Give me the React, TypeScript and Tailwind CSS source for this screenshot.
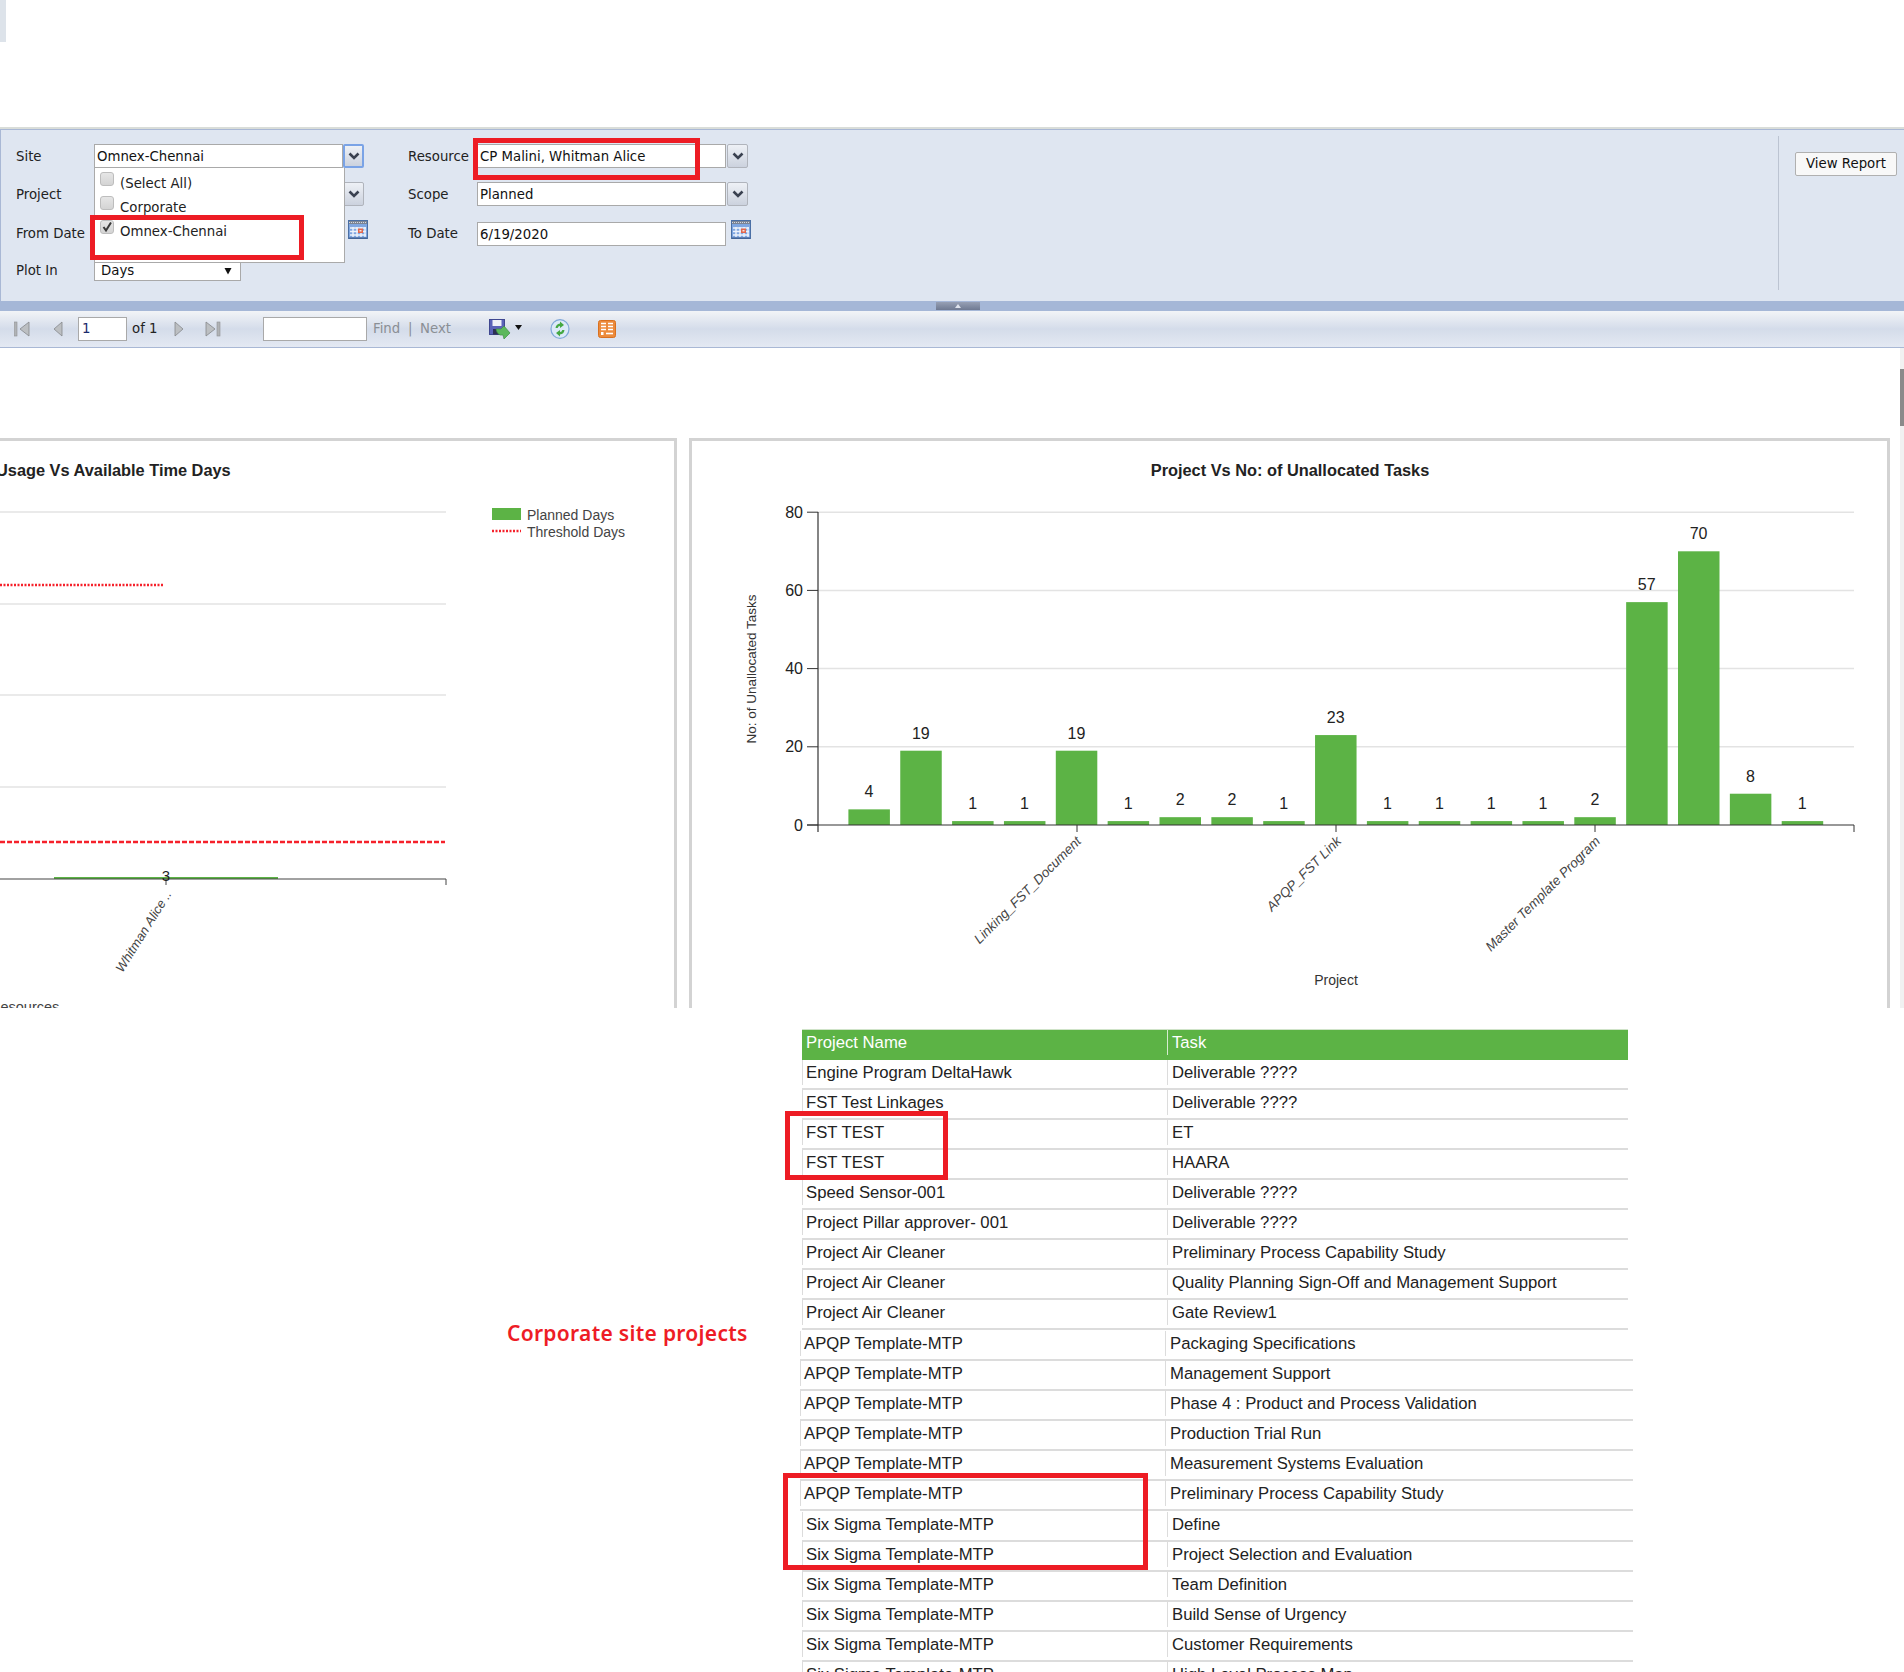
const bars = [4, 19, 1, 1, 19, 1, 2, 2, 1, 23, 1, 1, 1, 1, 2, 57, 70, 8, 1];

const tableTop = [
  ["Engine Program DeltaHawk", "Deliverable ????"],
  ["FST Test Linkages", "Deliverable ????"],
  ["FST TEST", "ET"],
  ["FST TEST", "HAARA"],
  ["Speed Sensor-001", "Deliverable ????"],
  ["Project Pillar approver- 001", "Deliverable ????"],
  ["Project Air Cleaner", "Preliminary Process Capability Study"],
  ["Project Air Cleaner", "Quality Planning Sign-Off and Management Support"],
  ["Project Air Cleaner", "Gate Review1"],
];

const tableMiddle = [
  ["APQP Template-MTP", "Packaging Specifications"],
  ["APQP Template-MTP", "Management Support"],
  ["APQP Template-MTP", "Phase 4 : Product and Process Validation"],
  ["APQP Template-MTP", "Production Trial Run"],
  ["APQP Template-MTP", "Measurement Systems Evaluation"],
  ["APQP Template-MTP", "Preliminary Process Capability Study"],
];

const tableBottom = [
  ["Six Sigma Template-MTP", "Define"],
  ["Six Sigma Template-MTP", "Project Selection and Evaluation"],
  ["Six Sigma Template-MTP", "Team Definition"],
  ["Six Sigma Template-MTP", "Build Sense of Urgency"],
  ["Six Sigma Template-MTP", "Customer Requirements"],
  ["Six Sigma Template-MTP", "High Level Process Map"],
];

function DropButton({ focused }: { focused?: boolean }) {
  return (
    <div className={`flex h-[24px] w-[21px] items-center justify-center rounded-[2px] bg-gradient-to-b from-[#eef1f6] to-[#ccd2de] ${focused ? "border-2 border-[#7aa3e6]" : "border border-[#b0b4bc]"}`}>
      <svg width="12" height="9" viewBox="0 0 12 9">
        <path d="M1.5 1.5 L6 6 L10.5 1.5" fill="none" stroke="#3a4150" strokeWidth="2.6" />
      </svg>
    </div>
  );
}

function CalendarIcon() {
  return (
    <svg width="20" height="19" viewBox="0 0 20 19" className="-mt-[5px]">
      <rect x="0.5" y="0.5" width="19" height="18" fill="#7fa6e0" stroke="#4a6fa5" />
      <rect x="1" y="1" width="18" height="3" fill="#7b8494" />
      <path d="M1 2.5h18" stroke="#d5d8de" strokeDasharray="1 1" />
      <path d="M2 8h16M2 11.5h16M2 15h16" stroke="#eef3fb" strokeWidth="1.6" />
      <path d="M5 7v10M9 7v10M13 7v10M17 7v10" stroke="#eef3fb" strokeWidth="1.4" />
      <rect x="10" y="8.5" width="5" height="4.5" fill="#e2664c" />
      <rect x="11.5" y="10" width="2" height="1.5" fill="#f6e4dc" />
      <path d="M1 18h18" stroke="#3c5a8a" />
    </svg>
  );
}

function TextBox({ value, className }: { value?: string; className?: string }) {
  return (
    <div className={`flex items-center border border-[#a9a9a9] bg-white pl-[2px] pt-[2px] text-[13.3px] leading-none text-[#111] ${className ?? ""}`}>
      {value}
    </div>
  );
}

function Row({ className, children }: { className?: string; children: React.ReactNode }) {
  return <div className={`flex h-[24px] items-center ${className ?? ""}`}>{children}</div>;
}

function Label({ text, className }: { text: string; className: string }) {
  return <div className={`shrink-0 text-[13.3px] text-[#222] ${className}`}>{text}</div>;
}

function CheckItem({ label, checked, className }: { label: string; checked?: boolean; className: string }) {
  return (
    <div className={`flex items-start pl-[5px] ${className}`}>
      <div className="relative h-[14px] w-[14px] rounded-[3px] border border-[#bdbdbd] bg-gradient-to-b from-[#e6e6e6] to-[#d4d4d4]">
        {checked && (
          <svg width="12" height="12" viewBox="0 0 12 12" className="absolute left-0 top-0">
            <path d="M2.5 6 L5 9.5 L10 1.5" fill="none" stroke="#3a3a3a" strokeWidth="2" />
          </svg>
        )}
      </div>
      <span className="ml-[6px] mt-[2px] text-[13.3px] text-[#222]">{label}</span>
    </div>
  );
}

function ToolbarArrow({ d, bar }: { d: string; bar?: number }) {
  return (
    <svg width="16" height="16" viewBox="0 0 16 16">
      {bar !== undefined && <rect x={bar} y="1" width="3" height="14" fill="#b0b3b6" stroke="#8f9295" strokeWidth="0.6" />}
      <path d={d} fill="#bcbfc2" stroke="#85888b" strokeWidth="0.8" />
    </svg>
  );
}

function SaveIcon() {
  return (
    <svg width="22" height="21" viewBox="0 0 22 21">
      <rect x="0.5" y="0.5" width="15" height="15" fill="#5a62b8" stroke="#3f4790" />
      <rect x="3.5" y="1" width="9" height="6" fill="#eef0f8" />
      <rect x="4" y="10" width="8" height="5.5" fill="#2c3153" />
      <path d="M7 10 L12 10 L15 7 L21 14 L15 20 L14 16 L11 16 Q8 15 7 10 Z" fill="#5cb85c" stroke="#3f8f45" strokeWidth="0.7" />
    </svg>
  );
}

function RefreshIcon() {
  return (
    <svg width="20" height="20" viewBox="0 0 20 20">
      <ellipse cx="10" cy="10" rx="9" ry="9.3" fill="#dbe9f8" stroke="#7fa8d8" strokeWidth="1.2" />
      <path d="M5.5 9 Q6 5 10 4.5 L10 2.5 L14 6 L10 9 L10 7 Q8 7 7.7 9 Z" fill="#45a843" />
      <path d="M14.5 11 Q14 15 10 15.5 L10 17.5 L6 14 L10 11 L10 13 Q12 13 12.3 11 Z" fill="#45a843" />
    </svg>
  );
}

function OrangeIcon() {
  return (
    <svg width="18" height="18" viewBox="0 0 18 18">
      <rect x="0.5" y="0.5" width="17" height="17" rx="2" fill="#ec8a3b" stroke="#d9701f" />
      <path d="M3 3.5h5M10 3.5h5M3 6.5h5M10 6.5h5M10 9.5h5M3 9.5h5" stroke="#fff" strokeWidth="1.6" />
      <rect x="3" y="12" width="2.5" height="3" fill="#fff" />
      <path d="M8 13.5h7" stroke="#fff" strokeWidth="1.6" />
    </svg>
  );
}

function UsageChart() {
  return (
    <svg width="674" height="567" viewBox="0 441 674 567" className="block">
      <text x="-4" y="476" fontSize="16.35" fontWeight="700" fill="#222">Usage Vs Available Time Days</text>
      {[512, 604, 695, 787].map((y) => (
        <line key={y} x1="0" x2="446" y1={y} y2={y} stroke="#e3e3e3" strokeWidth="1.5" />
      ))}
      <line x1="0" x2="164" y1="585" y2="585" stroke="#f5212b" strokeWidth="2.5" strokeDasharray="2 1.5" />
      <line x1="0" x2="445" y1="842" y2="842" stroke="#f5212b" strokeWidth="2.5" strokeDasharray="5 2" />
      <rect x="54" y="877" width="224" height="2" fill="#5cb345" />
      <line x1="0" x2="446" y1="879" y2="879" stroke="#444" strokeWidth="1.2" />
      <line x1="446" x2="446" y1="879" y2="885" stroke="#444" />
      <line x1="166" x2="166" y1="879" y2="885" stroke="#444" />
      <text x="166" y="881" fontSize="15" textAnchor="middle" fill="#222">3</text>
      <text transform="translate(172 894) rotate(-58)" fontSize="13" fontStyle="italic" textAnchor="end" fill="#444">Whitman Alice ..</text>
      <rect x="492" y="508" width="29" height="12" fill="#5cb345" />
      <text x="527" y="520" fontSize="14" fill="#444">Planned Days</text>
      <line x1="492" x2="521" y1="531" y2="531" stroke="#f5212b" strokeWidth="2.5" strokeDasharray="2 1.5" />
      <text x="527" y="537" fontSize="14" fill="#444">Threshold Days</text>
      <text x="-10" y="1012" fontSize="14.5" fill="#444">Resources</text>
    </svg>
  );
}

function TasksChart() {
  const zero = 825;
  const unit = 3.91;
  return (
    <svg width="1195" height="567" viewBox="692 441 1195 567" className="block">
      <text x="1290" y="476" fontSize="16.35" fontWeight="700" textAnchor="middle" fill="#222">Project Vs No: of Unallocated Tasks</text>
      {[20, 40, 60, 80].map((v) => (
        <line key={v} x1="818" x2="1854" y1={zero - v * unit} y2={zero - v * unit} stroke="#e3e3e3" strokeWidth="1.5" />
      ))}
      {bars.map((v, i) => (
        <rect key={i} x={848.4 + i * 51.85} y={zero - v * unit} width="41.5" height={v * unit} fill="#5cb345" />
      ))}
      {bars.map((v, i) => (
        <text key={i} x={869 + i * 51.85} y={zero - v * unit - 12} fontSize="16" textAnchor="middle" fill="#222">{v}</text>
      ))}
      <line x1="818" x2="818" y1="512" y2="832" stroke="#333" strokeWidth="1.2" />
      <line x1="807" x2="1854" y1={zero} y2={zero} stroke="#333" strokeWidth="1.2" />
      {[0, 20, 40, 60, 80].map((v) => (
        <g key={v}>
          <line x1="807" x2="818" y1={zero - v * unit} y2={zero - v * unit} stroke="#333" />
          <text x="803" y={zero - v * unit + 5.5} fontSize="16" textAnchor="end" fill="#222">{v}</text>
        </g>
      ))}
      {[1077, 1336, 1595, 1854].map((x) => (
        <line key={x} x1={x} x2={x} y1={zero} y2={zero + 7} stroke="#333" />
      ))}
      <text transform="translate(1082 842) rotate(-45)" fontSize="13.5" fontStyle="italic" textAnchor="end" fill="#444">Linking_FST_Document</text>
      <text transform="translate(1342 842) rotate(-45)" fontSize="13.5" fontStyle="italic" textAnchor="end" fill="#444">APQP_FST Link</text>
      <text transform="translate(1601 842) rotate(-45)" fontSize="13.5" fontStyle="italic" textAnchor="end" fill="#444">Master Template Program</text>
      <text x="1336" y="985" fontSize="14" textAnchor="middle" fill="#333">Project</text>
      <text transform="translate(756 669) rotate(-90)" fontSize="13.5" textAnchor="middle" fill="#333">No: of Unallocated Tasks</text>
    </svg>
  );
}

function TableRows({ rows, offset }: { rows: string[][]; offset: string }) {
  return (
    <>
      {rows.map(([project, task], i) => (
        <div key={i} className={`flex h-[30px] border-b-2 border-[#dcdcdc] pb-[3px] ${offset}`}>
          <div className="flex w-[365px] shrink-0 items-center border-l border-[#dcdcdc] pl-[3px]">{project}</div>
          <div className="flex flex-1 items-center border-l border-[#dcdcdc] pl-[4px]">{task}</div>
        </div>
      ))}
    </>
  );
}

export default function App() {
  return (
    <div className="relative h-[1672px] w-[1904px] overflow-hidden bg-white [font-family:Liberation_Sans,sans-serif]">
      <div className="h-[127px]">
        <div className="h-[42px] w-[6px] bg-[#dde3ea]" />
      </div>

      {/* report parameters */}
      <div className="border-t-2 border-[#d9ddd9]">
        <div className="flex h-[172px] border-t border-l border-[#a9b8d5] bg-[#dfe6f1] [font-family:DejaVu_Sans,sans-serif]">
          <div className="w-[1777px] pl-[15px] pt-[14px]">
            <Row>
              <Label text="Site" className="mt-[2px] w-[78px]" />
              <TextBox value="Omnex-Chennai" className="h-[24px] w-[249px]" />
              <DropButton focused />
              <Label text="Resource" className="ml-[44px] mt-[2px] w-[69px]" />
              <TextBox value="CP Malini, Whitman Alice" className="h-[24px] w-[249px]" />
              <div className="ml-[1px]"><DropButton /></div>
            </Row>
            <Row className="mt-[14px]">
              <Label text="Project" className="mt-[2px] w-[78px]" />
              <TextBox className="h-[24px] w-[249px]" />
              <DropButton />
              <Label text="Scope" className="ml-[44px] mt-[2px] w-[69px]" />
              <TextBox value="Planned" className="h-[24px] w-[249px]" />
              <div className="ml-[1px]"><DropButton /></div>
            </Row>
            <Row className="mt-[16px]">
              <Label text="From Date" className="w-[78px]" />
              <TextBox className="h-[24px] w-[249px]" />
              <div className="ml-[5px] flex h-[24px] w-[20px] items-start pt-[3px]"><CalendarIcon /></div>
              <Label text="To Date" className="ml-[40px] w-[69px]" />
              <TextBox value="6/19/2020" className="h-[24px] w-[249px]" />
              <div className="ml-[5px] flex h-[24px] w-[20px] items-start pt-[3px]"><CalendarIcon /></div>
            </Row>
            <Row className="mt-[13px]">
              <Label text="Plot In" className="w-[78px]" />
              <div className="flex h-[19px] w-[147px] items-center justify-between border border-[#a9a9a9] bg-white pl-[6px] pr-[8px] text-[13.3px] text-[#111]">
                <span>Days</span>
                <svg width="8" height="8" viewBox="0 0 8 8"><path d="M0.5 1h7L4 7.5z" fill="#111" /></svg>
              </div>
            </Row>
          </div>
          <div className="mb-[11px] mt-[6px] w-px bg-[#bcc4d2]" />
          <div className="pl-[16px] pt-[21px]">
            <button className="h-[24px] w-[102px] rounded-[2px] border border-[#b0b0b0] bg-[#f8f8f8] text-[13.3px] text-[#111] [font-family:DejaVu_Sans,sans-serif]">View Report</button>
          </div>
        </div>
      </div>

      <div className="flex h-[10px] justify-center bg-[#a5b7d7] pt-[1px]">
        <div className="ml-[12px] flex h-[8px] w-[44px] items-center justify-center bg-gradient-to-b from-[#97a0b4] to-[#6f7a92]">
          <svg width="6" height="4" viewBox="0 0 6 4"><path d="M3 0 L6 4 L0 4Z" fill="#dfe4ee" /></svg>
        </div>
      </div>

      {/* report toolbar */}
      <div className="flex h-[37px] items-center border-b border-[#a9b8d5] bg-gradient-to-b from-[#f2f4f7] via-[#d4dcea] to-[#e4e9f3] pl-[14px] text-[13.3px] [font-family:DejaVu_Sans,sans-serif]">
        <ToolbarArrow bar={0} d="M15 1 L15 15 L6 8 Z" />
        <div className="ml-[21px]"><ToolbarArrow d="M11 1 L11 15 L3 8 Z" /></div>
        <div className="ml-[11px] flex h-[24px] w-[49px] items-center border border-[#a9a9a9] bg-white pl-[3px] text-[#1a2a6c]">1</div>
        <span className="ml-[5px] w-[29px] text-[#222]">of 1</span>
        <div className="ml-[9px]"><ToolbarArrow d="M5 1 L5 15 L13 8 Z" /></div>
        <div className="ml-[19px]"><ToolbarArrow bar={12} d="M1 1 L1 15 L10 8 Z" /></div>
        <div className="ml-[42px] h-[24px] w-[104px] border border-[#a9a9a9] bg-white" />
        <span className="ml-[6px] w-[35px] text-[#8a8f95]">Find</span>
        <span className="w-[6px] text-[#8a8f95]">|</span>
        <span className="ml-[6px] w-[33px] text-[#8a8f95]">Next</span>
        <div className="ml-[36px]"><SaveIcon /></div>
        <svg width="7" height="5" viewBox="0 0 7 5" className="ml-[4px] -mt-[4px]"><path d="M0 0h7L3.5 5z" fill="#111" /></svg>
        <div className="ml-[28px]"><RefreshIcon /></div>
        <div className="ml-[28px]"><OrangeIcon /></div>
      </div>

      {/* charts */}
      <div className="relative h-[660px] overflow-hidden">
        <div className="absolute right-0 top-0 h-full w-[4px] bg-[#f1f1f1]">
          <div className="mt-[21px] h-[57px] bg-[#8a8a8a]" />
        </div>
        <div className="flex gap-[12px] pt-[90px]">
          <div className="h-[570px] w-[677px] shrink-0 overflow-hidden border-r-[3px] border-t-[3px] border-[#d3d3d3]">
            <UsageChart />
          </div>
          <div className="h-[570px] w-[1201px] shrink-0 overflow-hidden border-x-[3px] border-t-[3px] border-[#d3d3d3]">
            <TasksChart />
          </div>
        </div>
      </div>

      {/* task list */}
      <div className="flex text-[16.7px] text-[#222]">
        <div className="flex w-[800px] shrink-0 items-start pl-[507px] pt-[310px]">
          <span className="text-[21px] font-semibold tracking-[0.3px] text-[#ee1c25] [font-family:Noto_Sans,sans-serif]">Corporate site projects</span>
        </div>
        <div className="flex-1 pt-[21px]">
          <div className="ml-[2px] flex h-[31px] w-[826px] border-t border-[#cfe3c8] bg-[#5cb345] pb-[5px] text-white">
            <div className="flex w-[365px] shrink-0 items-center pl-[4px]">Project Name</div>
            <div className="flex flex-1 items-center border-l border-[#d6ecd0] pl-[4px]">Task</div>
          </div>
          <div className="w-[828px]">
            <TableRows rows={tableTop} offset="ml-[2px] w-[826px]" />
          </div>
          <div className="w-[833px] pt-[1px]">
            <TableRows rows={tableMiddle} offset="" />
            <div className="pt-[1px]">
              <TableRows rows={tableBottom} offset="ml-[2px]" />
            </div>
          </div>
        </div>
      </div>

      {/* open Site dropdown */}
      <div className="absolute left-[94px] top-[168px] h-[95px] w-[251px] border border-[#aaa] border-t-0 bg-white pt-[4px] [font-family:DejaVu_Sans,sans-serif]">
        <CheckItem label="(Select All)" className="h-[24px]" />
        <CheckItem label="Corporate" className="h-[24px]" />
        <CheckItem label="Omnex-Chennai" checked className="h-[24px]" />
      </div>

      {/* review markup */}
      <div className="absolute left-[473px] top-[138px] h-[42px] w-[227px] border-[5px] border-[#ed1c24]" />
      <div className="absolute left-[90px] top-[215px] h-[45px] w-[214px] border-[5px] border-[#ed1c24]" />
      <div className="absolute left-[785px] top-[1111px] h-[69px] w-[163px] border-[5px] border-[#ed1c24]" />
      <div className="absolute left-[783px] top-[1473px] h-[97px] w-[365px] border-[5px] border-[#ed1c24]" />
    </div>
  );
}
